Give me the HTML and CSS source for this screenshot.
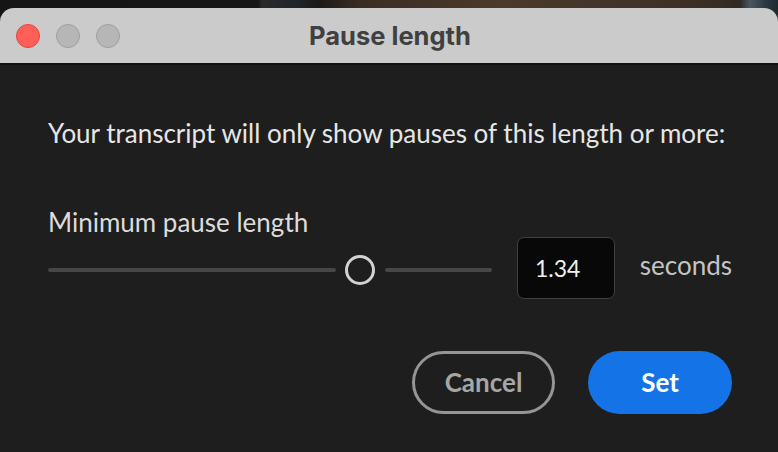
FILE: index.html
```html
<!DOCTYPE html>
<html>
<head>
<meta charset="utf-8">
<link rel="stylesheet" href="styles.css">
</head>
<body>
<div class="backdrop">
  <div class="window">
    <div class="titlebar">
      <div class="lights">
        <span class="light red"></span>
        <span class="light gray"></span>
        <span class="light gray"></span>
      </div>
      <div class="title">Pause length</div>
    </div>
    <div class="content">
      <p class="intro">Your transcript will only show pauses of this length or more:</p>
      <div class="field-label">Minimum pause length</div>
      <div class="slider-row">
        <div class="slider">
          <span class="track left"></span>
          <span class="thumb"></span>
          <span class="track right"></span>
        </div>
        <div class="num-input">1.34</div>
        <div class="unit">seconds</div>
      </div>
      <div class="buttons">
        <button class="btn cancel">Cancel</button>
        <button class="btn set">Set</button>
      </div>
    </div>
  </div>
</div>
</body>
</html>
```

FILE: styles.css
```css
html, body {
  margin: 0;
  padding: 0;
  width: 778px;
  height: 452px;
  overflow: hidden;
  background: #1e1e1e;
}
.backdrop {
  padding-top: 8px;
  background: linear-gradient(90deg, #151515 0, #161616 258px, #2a2a2a 262px, #202428 300px, #1b1a18 318px, #3a2d22 360px, #4a3a2c 500px, #3b2f25 700px, #2f2a26 740px, #4a5660 750px, #2b3a40 765px, #1d2a2e 778px);
  background-size: 100% 20px;
  background-repeat: no-repeat;
}
.window {
  width: 778px;
  height: 444px;
  background: #1e1e1e;
  border-radius: 14px 14px 0 0;
  overflow: hidden;
  font-family: "Lato", "Liberation Sans", sans-serif;
}
.titlebar {
  height: 55px;
  background: #cbcbcb;
  border-bottom: 2px solid #121212;
  display: flex;
  align-items: center;
  position: relative;
}
.lights {
  display: flex;
  gap: 16px;
  padding-left: 16px;
}
.light {
  width: 24px;
  height: 24px;
  border-radius: 50%;
  box-sizing: border-box;
}
.light.red {
  background: #fe5f57;
  border: 1px solid #e2463f;
}
.light.gray {
  background: #b6b6b6;
  border: 1px solid #9e9e9e;
}
.title {
  position: absolute;
  left: 0;
  right: 0;
  top: 0;
  height: 55px;
  line-height: 55px;
  text-align: center;
  font-family: "Inter", "Liberation Sans", sans-serif;
  font-weight: 700;
  font-size: 25.5px;
  color: #404040;
  padding-left: 2px;
}
.content {
  padding: 53px 46px 0 48px;
  color: #e6e6e6;
}
.intro {
  margin: 0;
  font-size: 26px;
  line-height: 30px;
}
.field-label {
  margin-top: 59px;
  font-size: 26px;
  line-height: 30px;
  color: #dcdcdc;
}
.slider-row {
  display: flex;
  align-items: center;
  margin-top: 0;
}
.slider {
  width: 444px;
  display: flex;
  align-items: center;
  padding-top: 4px;
}
.track {
  height: 4px;
  border-radius: 2px;
  background: #474747;
}
.track.left {
  width: 288px;
}
.track.right {
  width: 107px;
}
.thumb {
  width: 30px;
  height: 30px;
  box-sizing: border-box;
  border: 3.5px solid #d2d2d2;
  border-radius: 50%;
  margin: 0 10px 0 9px;
}
.num-input {
  margin-left: 25px;
  width: 98px;
  height: 62px;
  box-sizing: border-box;
  background: #080808;
  border: 1.5px solid #404040;
  border-radius: 7px;
  padding-left: 17px;
  display: flex;
  align-items: center;
  font-size: 23px;
  color: #f0f0f0;
}
.unit {
  margin-left: 25px;
  font-size: 26px;
  color: #c4c4c4;
  padding-bottom: 6px;
}
.buttons {
  display: flex;
  justify-content: flex-end;
  gap: 33px;
  margin-top: 52px;
}
.btn {
  width: 144px;
  height: 63px;
  border-radius: 32px;
  box-sizing: border-box;
  font-family: "Lato", "Liberation Sans", sans-serif;
  font-weight: 700;
  font-size: 26px;
  cursor: pointer;
  padding: 0 0 2px;
}
.btn.cancel {
  width: 143px;
  background: transparent;
  border: 3px solid #959595;
  color: #a6a6a6;
}
.btn.set {
  background: #1473e6;
  border: none;
  color: #ffffff;
}
```
